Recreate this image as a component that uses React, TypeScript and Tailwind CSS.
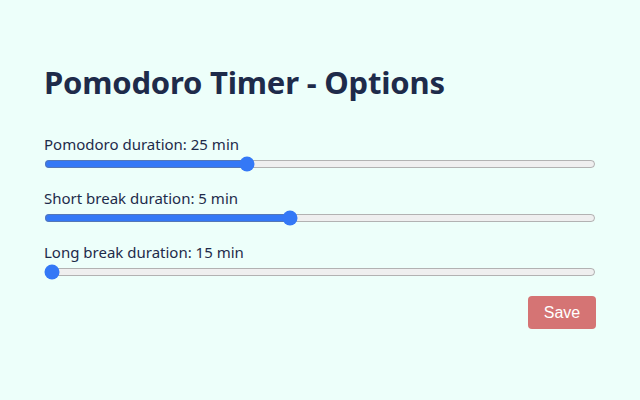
import { useState } from 'react';

const fields = [
  { key: 'pomodoro', label: 'Pomodoro duration', min: 5, max: 60, init: 25 },
  { key: 'short', label: 'Short break duration', min: 1, max: 10, init: 5 },
  { key: 'long', label: 'Long break duration', min: 15, max: 30, init: 15 },
];

export default function App() {
  const [values, setValues] = useState<Record<string, number>>(
    Object.fromEntries(fields.map((f) => [f.key, f.init]))
  );

  return (
    <main className="min-h-screen w-full bg-[#edfffa] font-['Noto_Sans',sans-serif] text-[#1e2b4a]">
      <div className="px-[44px] pt-[62px]">
        <h1 className="text-[31px] font-bold leading-[40px] tracking-[-0.2px]">Pomodoro Timer - Options</h1>

        <div className="mt-[33px] flex flex-col gap-[15px]">
          {fields.map((f) => (
            <label key={f.key} className="flex flex-col">
              <span className="text-[15px] leading-[19px]">
                {f.label}: {values[f.key]} min
              </span>
              <input
                type="range"
                min={f.min}
                max={f.max}
                value={values[f.key]}
                onChange={(e) => setValues({ ...values, [f.key]: Number(e.target.value) })}
                className="m-0 h-[20px] w-full accent-[#3478f6]"
              />
            </label>
          ))}
        </div>

        <div className="mt-[14px] flex justify-end">
          <button className="h-[33px] w-[68px] rounded-[4px] bg-[#d57474] font-['Liberation_Sans',sans-serif] text-[16px] text-white">
            Save
          </button>
        </div>
      </div>
    </main>
  );
}
